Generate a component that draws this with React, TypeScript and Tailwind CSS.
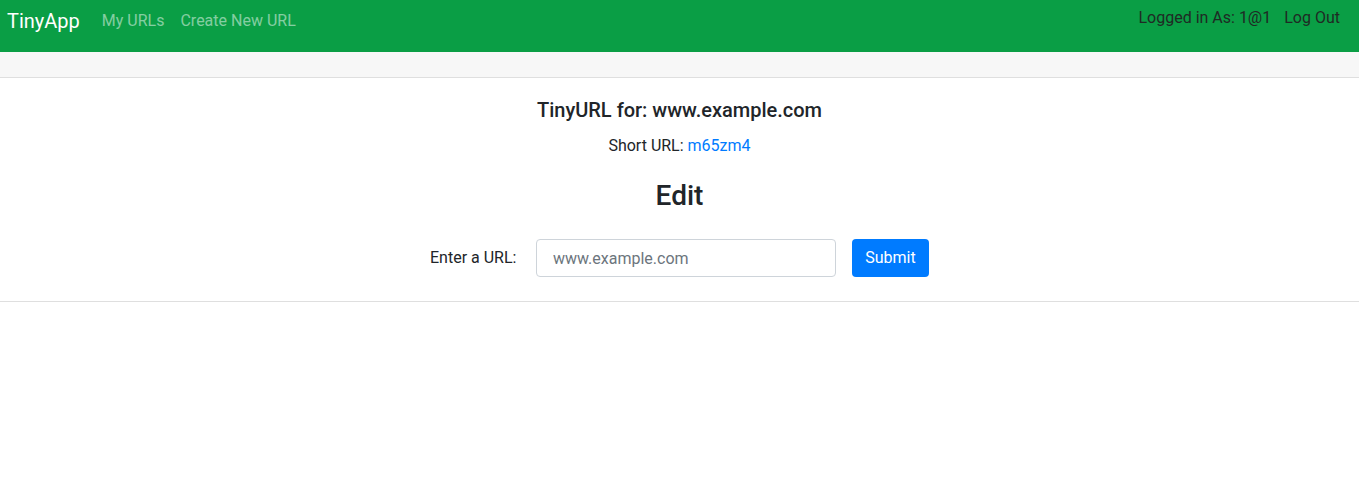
import React, { useState } from 'react';

const App: React.FC = () => {
  const [longUrl, setLongUrl] = useState('');

  return (
    <div className="min-h-[483px] bg-white text-[#212529] font-['Roboto','Liberation_Sans',Arial,sans-serif]">
      {/* Navbar */}
      <nav className="flex h-[52px] items-start justify-between bg-[#0a9e45] pl-[7px] pr-[19px]">
        <div className="flex items-start">
          <a href="#" className="pt-[6px] text-[20px] leading-[30px] text-white">
            TinyApp
          </a>
          <a href="#" className="ml-[22px] pt-[9px] text-[16px] leading-6 text-white/50">
            My URLs
          </a>
          <a href="#" className="ml-4 pt-[9px] text-[16px] leading-6 text-white/50">
            Create New URL
          </a>
        </div>
        <div className="flex items-start pt-[6px] text-[16px] leading-6 text-[#1f2a24]">
          <span>Logged in As: 1@1</span>
          <a href="#" className="ml-[13px]">
            Log Out
          </a>
        </div>
      </nav>

      {/* Card */}
      <div className="border-b border-[#dfdfdf]">
        <div className="h-[26px] border-b border-[#dfdfdf] bg-[#f7f7f7]" />
        <div className="flex flex-col items-center px-5 pt-5">
          <h5 className="text-[20px] font-medium leading-6">TinyURL for: www.example.com</h5>
          <p className="mt-3 text-[16px] leading-6">
            Short URL: <a href="#" className="text-[#007bff]">m65zm4</a>
          </p>
          <h3 className="mt-[21px] text-[28px] font-medium leading-[34px]">Edit</h3>
          <form
            className="mb-6 mt-[26px] flex items-center"
            onSubmit={(e) => e.preventDefault()}
          >
            <label htmlFor="longURL" className="mr-4 w-[90px] text-[16px] leading-6">
              Enter a URL:
            </label>
            <input
              id="longURL"
              type="text"
              value={longUrl}
              onChange={(e) => setLongUrl(e.target.value)}
              placeholder="www.example.com"
              className="h-[38px] w-[300px] rounded border border-[#ced4da] bg-white pl-4 pr-3 text-[16px] text-[#495057] placeholder:text-[#6c757d] focus:outline-none"
            />
            <button
              type="submit"
              className="ml-4 h-[38px] w-[77px] rounded bg-[#007bff] text-[16px] text-white"
            >
              Submit
            </button>
          </form>
        </div>
      </div>
    </div>
  );
};

export default App;
